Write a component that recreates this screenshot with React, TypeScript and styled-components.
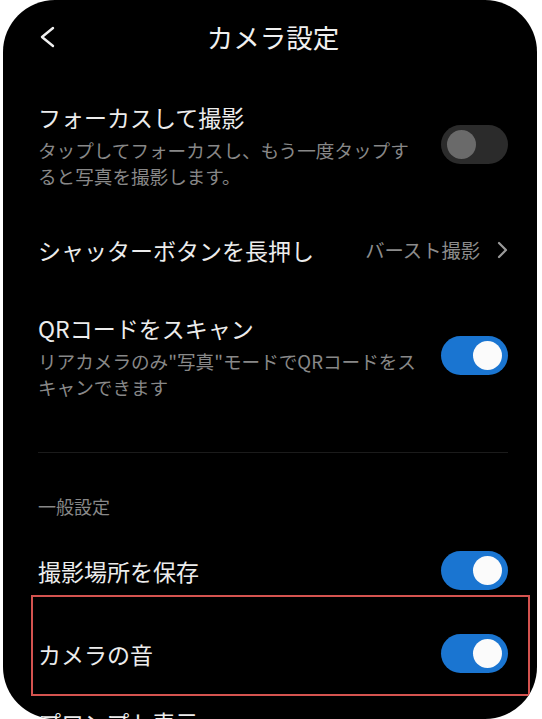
import styled, { createGlobalStyle } from 'styled-components';

const GlobalStyle = createGlobalStyle`
  html, body {
    margin: 0;
    padding: 0;
    background: #ffffff;
  }
  body {
    font-family: "Noto Sans CJK JP", "Noto Sans", sans-serif;
  }
`;

const Screen = styled.div`
  margin-left: 3px;
  width: 534px;
  height: 719px;
  background: #000;
  border-radius: 52px;
  overflow: hidden;
  color: #ececec;
`;

const Header = styled.header`
  display: grid;
  grid-template-columns: 1fr auto 1fr;
  align-items: center;
  height: 74px;
  padding: 0 29px 0 35px;
`;

const BackBtn = styled.button`
  justify-self: start;
  display: flex;
  align-items: center;
  padding: 0;
  border: 0;
  background: none;
  color: #f0f0f0;
  cursor: pointer;
`;

const Title = styled.h1`
  margin: 0;
  font-size: 26.5px;
  font-weight: 400;
  line-height: 34px;
  color: #f0f0f0;
`;

const Content = styled.main`
  padding: 4px 29px 0 35px;
`;

const Row = styled.div<{ $highlight?: boolean; $tight?: boolean }>`
  position: relative;
  display: flex;
  align-items: center;
  gap: 40px;
  padding: ${({ $tight }) => ($tight ? '10px 0' : '22px 0')};

  ${({ $highlight }) =>
    $highlight &&
    `
    &::after {
      content: '';
      position: absolute;
      top: -17px;
      bottom: -1px;
      left: -7px;
      right: -22px;
      border: 2px solid #d4534f;
      pointer-events: none;
    }
  `}
`;

const RowText = styled.div`
  flex: 1;
  min-width: 0;
`;

const RowTitle = styled.div`
  font-size: 23px;
  line-height: 34px;
  color: #ececec;
  white-space: nowrap;
`;

const RowSub = styled.div`
  margin-top: 3px;
  font-size: 18.6px;
  line-height: 26px;
  color: #888888;
  white-space: nowrap;
`;

const Toggle = styled.span<{ $on: boolean }>`
  position: relative;
  flex: none;
  width: 67px;
  height: 39px;
  border-radius: 20px;
  background: ${({ $on }) => ($on ? '#1a75d1' : '#2b2b2b')};

  &::after {
    content: '';
    position: absolute;
    top: 5px;
    ${({ $on }) => ($on ? 'right: 6px;' : 'left: 6px;')}
    width: 29px;
    height: 29px;
    border-radius: 50%;
    background: ${({ $on }) => ($on ? '#fbfbfb' : '#6a6a6a')};
  }
`;

const Value = styled.div`
  display: flex;
  align-items: center;
  gap: 16px;
  font-size: 19.3px;
  line-height: 34px;
  color: #8c8c8c;
  white-space: nowrap;
`;

const Divider = styled.hr`
  margin: 30px 0 0;
  border: 0;
  height: 1px;
  background: #1b1b1b;
`;

const SectionLabel = styled.div`
  padding: 42px 0 12px;
  font-size: 18px;
  line-height: 22px;
  color: #888888;
`;

function ChevronLeft() {
  return (
    <svg width="18" height="22" viewBox="0 0 18 22" fill="none">
      <polyline
        points="15,2 4,11 15,20"
        stroke="currentColor"
        strokeWidth="2.4"
        strokeLinecap="round"
        strokeLinejoin="round"
      />
    </svg>
  );
}

function ChevronRight() {
  return (
    <svg width="12" height="18" viewBox="0 0 12 18" fill="none">
      <polyline
        points="3,2 10,9 3,16"
        stroke="#9a9a9a"
        strokeWidth="2.2"
        strokeLinecap="round"
        strokeLinejoin="round"
      />
    </svg>
  );
}

export default function App() {
  return (
    <>
      <GlobalStyle />
      <Screen>
        <Header>
          <BackBtn aria-label="戻る">
            <ChevronLeft />
          </BackBtn>
          <Title>カメラ設定</Title>
          <span />
        </Header>
        <Content>
          <Row>
            <RowText>
              <RowTitle>フォーカスして撮影</RowTitle>
              <RowSub>
                タップしてフォーカスし、もう一度タップす
                <br />
                ると写真を撮影します。
              </RowSub>
            </RowText>
            <Toggle $on={false} />
          </Row>

          <Row>
            <RowText>
              <RowTitle>シャッターボタンを長押し</RowTitle>
            </RowText>
            <Value>
              バースト撮影
              <ChevronRight />
            </Value>
          </Row>

          <Row>
            <RowText>
              <RowTitle>QRコードをスキャン</RowTitle>
              <RowSub>
                リアカメラのみ"写真"モードでQRコードをス
                <br />
                キャンできます
              </RowSub>
            </RowText>
            <Toggle $on />
          </Row>

          <Divider />
          <SectionLabel>一般設定</SectionLabel>

          <Row>
            <RowText>
              <RowTitle>撮影場所を保存</RowTitle>
            </RowText>
            <Toggle $on />
          </Row>

          <Row $highlight>
            <RowText>
              <RowTitle>カメラの音</RowTitle>
            </RowText>
            <Toggle $on />
          </Row>

          <Row $tight>
            <RowText>
              <RowTitle>プロンプト表示</RowTitle>
            </RowText>
          </Row>
        </Content>
      </Screen>
    </>
  );
}
